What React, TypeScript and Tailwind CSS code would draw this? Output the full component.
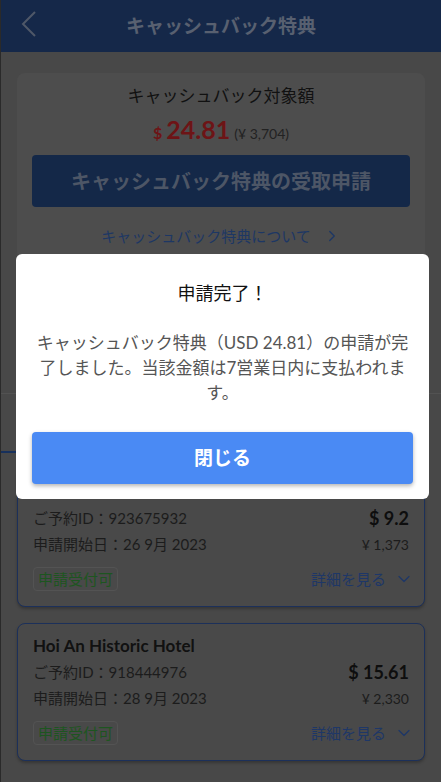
import { ChevronRight, ChevronDown } from "lucide-react";

// Cashback screen, shown dimmed behind the "application done" dialog

const bookings = [
  { hotel: "", id: "923675932", date: "26 9月 2023", usd: "$ 9.2", jpy: "¥ 1,373" },
  { hotel: "Hoi An Historic Hotel", id: "918444976", date: "28 9月 2023", usd: "$ 15.61", jpy: "¥ 2,330" },
];

const font = { fontFamily: 'Lato, "Noto Sans CJK JP", sans-serif' };

function BookingCard({ b }: { b: (typeof bookings)[number] }) {
  return (
    <div className="rounded-lg border border-[#1c305a] bg-[#494949] px-[15px] pt-3 pb-[15px] shadow-[0_2px_3px_rgba(0,0,0,0.25)]">
      <p className="h-5 text-[17px] leading-5 font-bold text-[#111111]">{b.hotel}</p>
      <div className="mt-[3px] flex h-[26px] items-center justify-between">
        <span className="text-[15px] text-[#1c1c1c]">ご予約ID：{b.id}</span>
        <span className="text-[18px] font-bold text-[#0e0e0e]">{b.usd}</span>
      </div>
      <div className="flex h-[26px] items-center justify-between">
        <span className="text-[15px] text-[#1c1c1c]">申請開始日：{b.date}</span>
        <span className="text-[14px] text-[#1c1c1c]">{b.jpy}</span>
      </div>
      <div className="mt-[10px] flex h-6 items-center justify-between">
        <span className="rounded border border-[#535353] px-1 text-[15px] leading-[22px] text-[#1d5520]">
          申請受付可
        </span>
        <span className="flex items-center gap-2 text-[15px] text-[#1e3767]">
          詳細を見る
          <ChevronDown size={20} strokeWidth={1.5} className="-mr-[5px]" />
        </span>
      </div>
    </div>
  );
}

export default function App() {
  return (
    <div style={font} className="relative h-[782px] w-[441px] overflow-hidden border-l border-[#2a2a2a] bg-[#484848]">
      <header className="relative flex h-[52px] items-center justify-center bg-[#152849]">
        <svg width="20" height="30" viewBox="0 0 20 30" className="absolute left-[19px] top-[10px]">
          <polyline points="15,2 3,14 15,26" fill="none" stroke="#4f5868" strokeWidth="2" />
        </svg>
        <h1 className="text-[19px] font-bold text-[#586070]">キャッシュバック特典</h1>
      </header>

      <div className="px-4 pt-[21px]">
        <div className="rounded-lg bg-[#4d4d4d] px-[15px] pt-3 pb-3 text-center">
          <p className="text-[17px] leading-[22px] text-[#111111]">キャッシュバック対象額</p>
          <div className="mt-1 flex h-8 items-baseline justify-center gap-1">
            <span className="text-[16px] font-bold text-[#6d1416]">$</span>
            <span className="text-[25px] font-bold text-[#6d1416]">24.81</span>
            <span className="text-[14px] text-[#222222]">(¥ 3,704)</span>
          </div>
          <button className="mt-3 h-[52px] w-full rounded bg-[#142848] text-[20px] font-bold text-[#4d5666]">
            キャッシュバック特典の受取申請
          </button>
          <p className="mt-[18px] flex items-center justify-center gap-3 text-[15px] leading-[22px] text-[#1d3764]">
            キャッシュバック特典について
            <ChevronRight size={18} strokeWidth={1.8} />
          </p>
        </div>
      </div>

      <div className="mt-[134px] border-t border-[#525252]">
        <div className="flex h-[59px]">
          <div className="flex-1 border-b-2 border-[#17305c]" />
          <div className="flex-1" />
        </div>
      </div>

      <div className="flex flex-col gap-4 px-4 pt-4">
        {bookings.map((b) => (
          <BookingCard key={b.id} b={b} />
        ))}
      </div>

      <div className="absolute left-[15px] top-[254px] w-[413px] rounded-md bg-white px-4 pt-[27px] pb-[15px] text-center">
        <h2 className="text-[18px] leading-6 text-[#111111]">申請完了！</h2>
        <p className="mt-[25px] px-1 text-[17px] leading-[25px] text-[#555555]">
          キャッシュバック特典（USD 24.81）の申請が完了しました。当該金額は7営業日内に支払われます。
        </p>
        <button className="mt-[27px] h-[52px] w-full rounded bg-[#4a8af4] text-[19px] font-bold text-white shadow-[0_2px_4px_rgba(0,0,0,0.3)]">
          閉じる
        </button>
      </div>
    </div>
  );
}
